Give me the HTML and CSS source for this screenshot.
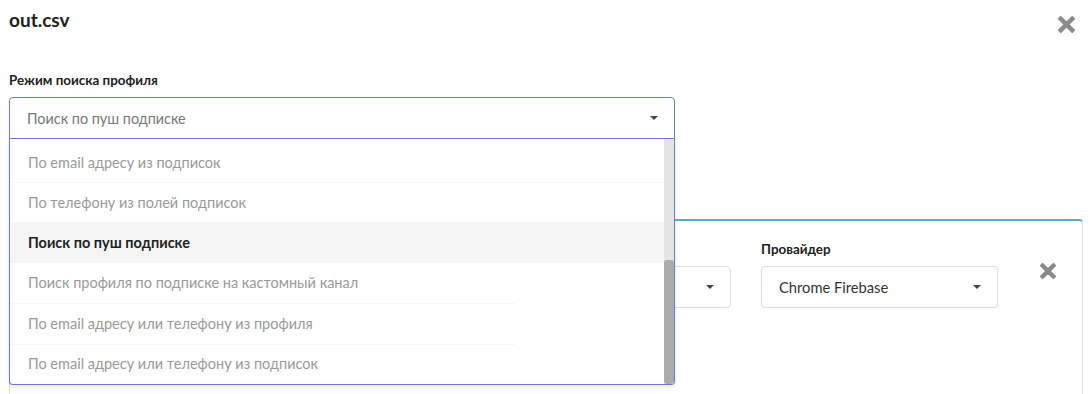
FILE: index.html
```html
<!DOCTYPE html>
<html lang="ru">
<head>
  <meta charset="UTF-8" />
  <title>out.csv</title>
  <link rel="stylesheet" href="styles.css">
</head>
<body>
  <div class="modal">
    <div class="modal-head">
      <h1>out.csv</h1>
      <span class="close">
        <svg viewBox="0 0 20 20" width="19" height="19"><path d="M4 1.5 L10 7.5 L16 1.5 L18.5 4 L12.5 10 L18.5 16 L16 18.5 L10 12.5 L4 18.5 L1.5 16 L7.5 10 L1.5 4 Z" fill="currentColor" stroke="currentColor" stroke-width="1.2" stroke-linejoin="round"/></svg>
      </span>
    </div>

    <!-- Режим поиска -->
    <div class="field mode">
      <label>Режим поиска профиля</label>
      <div class="select open">
        <div class="select-value">
          <span class="placeholder">Поиск по пуш подписке</span>
          <span class="caret"></span>
        </div>
        <div class="dropdown">
          <ul class="options">
            <li class="part">По email адресу из подписок</li>
            <li>По телефону из полей подписок</li>
            <li class="active">Поиск по пуш подписке</li>
            <li class="short">Поиск профиля по подписке на кастомный канал</li>
            <li class="short">По email адресу или телефону из профиля</li>
            <li class="short last">По email адресу или телефону из подписок</li>
          </ul>
          <div class="scrollbar"><div class="thumb"></div></div>
        </div>
      </div>
    </div>

    <!-- Карточка провайдера -->
    <div class="card">
      <div class="field grow">
        <label>&nbsp;</label>
        <div class="select">
          <div class="select-value"><span></span><span class="caret"></span></div>
        </div>
      </div>
      <div class="field provider">
        <label>Провайдер</label>
        <div class="select">
          <div class="select-value"><span class="value">Chrome Firebase</span><span class="caret"></span></div>
        </div>
      </div>
      <span class="close small">
        <svg viewBox="0 0 20 20" width="18" height="18"><path d="M4 1.5 L10 7.5 L16 1.5 L18.5 4 L12.5 10 L18.5 16 L16 18.5 L10 12.5 L4 18.5 L1.5 16 L7.5 10 L1.5 4 Z" fill="currentColor" stroke="currentColor" stroke-width="1.2" stroke-linejoin="round"/></svg>
      </span>
    </div>
  </div>
</body>
</html>
```

FILE: styles.css
```css
* {
  box-sizing: border-box;
}
html, body {
  margin: 0;
  height: 100%;
  background: #fff;
  font-family: Lato, "Noto Sans", Arial, sans-serif;
  color: #333;
  overflow: hidden;
}

.modal {
  padding: 0 9px;
}

.modal-head {
  display: flex;
  justify-content: space-between;
  align-items: flex-start;
  height: 72px;
}

.modal-head h1 {
  margin: 8px 0 0;
  font-size: 19px;
  font-weight: 700;
  color: #222;
}

.close {
  color: #8a8a8a;
  display: inline-flex;
}
.modal-head .close {
  margin: 15px 7px 0 0;
}

.field label {
  display: block;
  font-size: 13.4px;
  font-weight: 700;
  color: #222;
  margin-bottom: 9px;
}

.mode {
  width: 666px;
  position: relative;
  z-index: 2;
}

.select {
  position: relative;
  border: 1px solid #ddd;
  border-radius: 4px;
  background: #fff;
}
.select.open {
  border-color: #6b79d2;
  border-radius: 4px 4px 0 0;
}

.select-value {
  height: 40px;
  display: flex;
  align-items: center;
  justify-content: space-between;
  padding: 0 16px 0 17px;
  font-size: 14.7px;
}
.placeholder {
  color: #777;
  font-size: 14.4px;
}
.value {
  color: #333;
}

.caret {
  width: 0;
  height: 0;
  border-left: 4px solid transparent;
  border-right: 4px solid transparent;
  border-top: 4px solid #444;
}

.dropdown {
  position: absolute;
  left: -1px;
  right: -1px;
  top: 41px;
  height: 246px;
  background: #fff;
  border: 1px solid #6b79d2;
  border-top: none;
  border-radius: 0 0 4px 4px;
  box-shadow: 0 2px 4px rgba(0,0,0,0.1);
  overflow: hidden;
  display: flex;
}

.options {
  list-style: none;
  margin: 0;
  padding: 0;
  flex: 1;
}
.options li {
  height: 40.4px;
  display: flex;
  align-items: center;
  padding-left: 18px;
  font-size: 14.5px;
  color: #999;
  border-top: 1px solid #f7f7f7;
}
.options li.part {
  height: 43px;
  padding-top: 3px;
  border-top: none;
}
.options li.active {
  background: #f5f5f5;
  color: #222;
  font-weight: 700;
  border-top: none;
}
.options li.short {
  border-top: none;
  background: linear-gradient(#f7f7f7, #f7f7f7) no-repeat 0 0 / 506px 1px;
}
.options li.short:first-of-type,
.options li.active + li.short {
  background: none;
}

.scrollbar {
  width: 10px;
  background: #e4e4e4;
  display: flex;
  flex-direction: column;
  justify-content: flex-end;
}
.thumb {
  height: 124px;
  background: #acacac;
  border-radius: 3px;
}

.card {
  margin-top: 80px;
  border: 1px solid #ddd;
  border-top: 2px solid #5ba6d2;
  border-bottom: none;
  border-radius: 4px 4px 0 0;
  height: 175px;
  display: flex;
  align-items: flex-start;
  padding: 20px 25px 0 19px;
  gap: 30px;
}
.card .grow {
  flex: 1;
}
.card .provider {
  width: 237px;
}
.card .close.small {
  margin: 21px 0 0 11px;
}
```
